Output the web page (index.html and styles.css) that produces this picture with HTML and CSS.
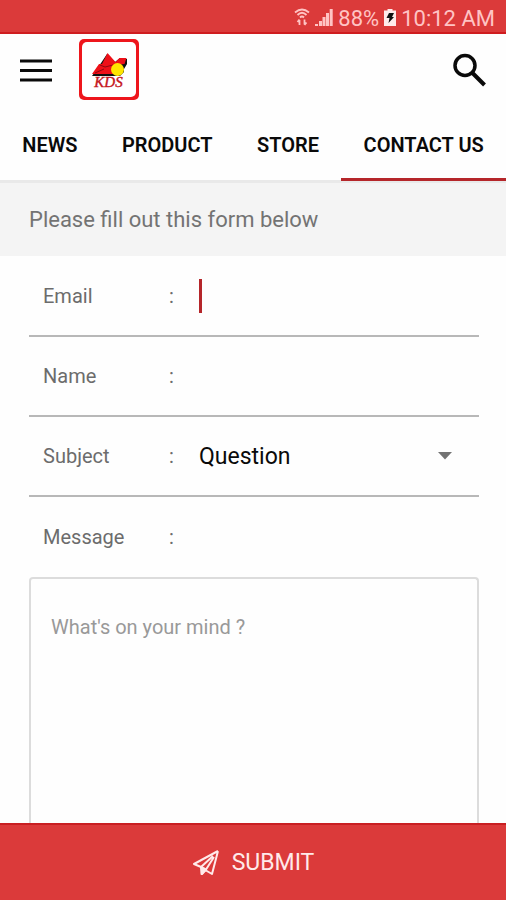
FILE: index.html
```html
<!DOCTYPE html>
<html lang="en">
<head>
<meta charset="utf-8">
<meta name="viewport" content="width=device-width, initial-scale=1">
<title>KDS - Contact us</title>
<link rel="stylesheet" href="styles.css">
</head>
<body>
<div class="app">
  <div class="status">
    <svg width="16" height="20" viewBox="0 0 16 20" fill="none" stroke="currentColor" stroke-width="1.800">
      <path d="M1 4.500Q8-1.500 15 4.500M3.500 7Q8 2.500 12.500 7M6 9.500Q8 7.500 10 9.500"/>
      <path d="M5.500 17v-5M3.500 14l2-2.500M10.500 11.500v5M12.500 14.500l-2 2.500"/>
    </svg>
    <svg width="18" height="18" viewBox="0 0 18 18" fill="currentColor">
      <path d="M0 15h3v2H0zM4 12h3v5H4zM7.500 8h3v9h-3zM11 4h3v13h-3zM14.700 0h3v17h-3z"/>
    </svg>
    <span>88%</span>
    <svg width="12" height="18" viewBox="0 0 12 18">
      <path d="M3.500 0h5v1.500H12V17H0V1.500h3.500z" fill="#ffeaea"/>
      <path d="M5 4h5L8 8h2l-5.500 6 1-5h-3z" fill="#111"/>
    </svg>
    <span>10:12 AM</span>
  </div>

  <header class="bar">
    <button class="icon-btn" type="button" aria-label="Menu">
      <svg width="32" height="24" viewBox="0 0 32 24" fill="none" stroke="#0a0a0a" stroke-width="3"><path d="M0 3h32M0 12.500h32M0 22h32"/></svg>
    </button>
    <a class="logo" href="#" aria-label="KDS home">
      <svg width="62" height="62" viewBox="0 0 62 62">
        <rect x="1" y="0" width="60" height="61" rx="5" fill="#ee161c"/>
        <rect x="4" y="3" width="54" height="55" rx="5" fill="#fff"/>
        <path d="M14 37l9-13 6-9 8 8 5-4 7 1v5l-3 5v3l-4 4z" fill="#111"/>
        <path d="M14 35l7-10h3l5.500-11 8 9 4-4h7l-2 6-7 1-4 9z" fill="#ee1018"/>
        <path d="M22 26l5 2 8-2M17 34l9-4" fill="none" stroke="#8d0910"/>
        <circle cx="39.500" cy="30.500" r="6.500" fill="#ffe600"/>
        <text class="logo-text" x="30.500" y="48" text-anchor="middle">KDS</text>
      </svg>
    </a>
    <button class="icon-btn search" type="button" aria-label="Search">
      <svg width="34" height="34" viewBox="0 0 34 34" fill="none" stroke="#0a0a0a"><circle cx="13" cy="12.500" r="10" stroke-width="3.500"/><path d="M20.500 20l12 12" stroke-width="4"/></svg>
    </button>
  </header>

  <nav class="tabs">
    <a href="#">NEWS</a>
    <a href="#">PRODUCT</a>
    <a href="#">STORE</a>
    <a class="active" href="#" aria-current="page">CONTACT US</a>
  </nav>

  <p class="notice">Please fill out this form below</p>

  <form class="form" id="contact">
    <div class="row">
      <label for="email">Email</label><span class="colon">:</span>
      <span class="caret"></span><input id="email" type="email">
    </div>
    <div class="row">
      <label for="name">Name</label><span class="colon">:</span>
      <input id="name" type="text">
    </div>
    <div class="row">
      <label for="subject">Subject</label><span class="colon">:</span>
      <select id="subject"><option>Question</option></select>
      <svg class="arrow" width="14" height="8" viewBox="0 0 14 8"><path d="M0 0h14L7 7.500z" fill="#737373"/></svg>
    </div>
    <div class="row row-message">
      <label for="message">Message</label><span class="colon">:</span>
    </div>
    <textarea id="message" placeholder="What's on your mind ?"></textarea>
  </form>

  <button class="submit" type="submit" form="contact">
    <svg width="28" height="28" viewBox="0 0 28 28" fill="none" stroke="currentColor" stroke-width="2" stroke-linejoin="round">
      <path d="M26 2L2 15l7 3L21 7M26 2l-6 23-6-3.500M9.500 18v7l4.500-4.500L22 8"/>
      <path d="M9 18l5 2.500-4 4.500z" fill="currentColor"/>
    </svg>
    <span>SUBMIT</span>
  </button>
</div>
</body>
</html>
```
FILE: styles.css
```css
* { box-sizing: border-box; }

body {
  margin: 0;
  background: #fefefe;
  font-family: Roboto, "Liberation Sans", sans-serif;
  color: #0a0a0a;
}

button, input, select, textarea { font: inherit; color: inherit; }

a { color: inherit; text-decoration: none; }

svg { display: block; flex: none; }

.app {
  display: flex;
  flex-direction: column;
  height: 100vh;
}

.status {
  flex: none;
  display: flex;
  align-items: center;
  justify-content: flex-end;
  gap: 5px;
  height: 34px;
  padding: 4px 11px 0 0;
  background: #db3a3a;
  border-bottom: 2px solid #cf1c1f;
  color: #ffc4c4;
  font-size: 22px;
}

.bar {
  flex: none;
  display: flex;
  align-items: center;
  gap: 26px;
  height: 72px;
  padding: 0 20px;
}

.icon-btn { padding: 0; border: 0; background: none; }

.search { margin-left: auto; }

.logo-text {
  font: italic 15px "Liberation Serif", serif;
  fill: #c5141b;
  stroke: #c5141b;
  stroke-width: 0.4px;
}

.tabs {
  flex: none;
  display: flex;
  height: 77px;
  border-bottom: 3px solid #e9e9e9;
  font-size: 20px;
  font-weight: 600;
}

.tabs a {
  display: flex;
  flex: 1 1 auto;
  align-items: center;
  justify-content: center;
  padding-top: 6px;
  margin-bottom: -1px;
  border-bottom: 3px solid transparent;
}

.tabs .active { border-bottom-color: #b5262a; }

.notice {
  flex: none;
  margin: 0;
  padding: 24px 29px;
  background: #f4f4f4;
  color: #737373;
  font-size: 22px;
  line-height: 25px;
}

.form {
  flex: 1;
  min-height: 0;
  display: flex;
  flex-direction: column;
  padding: 1px 27px 0 29px;
  color: #6c6c6c;
  font-size: 20px;
}

.row {
  flex: none;
  display: flex;
  align-items: center;
  position: relative;
  height: 80px;
  padding-left: 14px;
  border-bottom: 2px solid #b8b8b8;
}

.row-message { border-bottom: 0; }

.row label { width: 126px; }

.colon { width: 30px; }

.row input, .row select {
  flex: 1;
  min-width: 0;
  padding: 0;
  border: 0;
  outline: 0;
  background: none;
  color: #0a0a0a;
  font-size: 23px;
  appearance: none;
}

.caret { width: 3px; height: 34px; background: #b5262a; }

.arrow { position: absolute; right: 27px; pointer-events: none; }

textarea {
  flex: 1;
  min-height: 0;
  width: 100%;
  padding: 36px 20px;
  border: 2px solid #dcdcdc;
  border-bottom: 0;
  border-radius: 4px 4px 0 0;
  outline: 0;
  background: none;
  resize: none;
}

textarea::placeholder { color: #999; }

.submit {
  flex: none;
  display: flex;
  align-items: center;
  justify-content: center;
  gap: 12px;
  height: 77px;
  padding: 0;
  border: 0;
  border-top: 2px solid #c91f22;
  background: #db3a3a;
  color: #ffeaea;
  font-size: 23px;
}
```
